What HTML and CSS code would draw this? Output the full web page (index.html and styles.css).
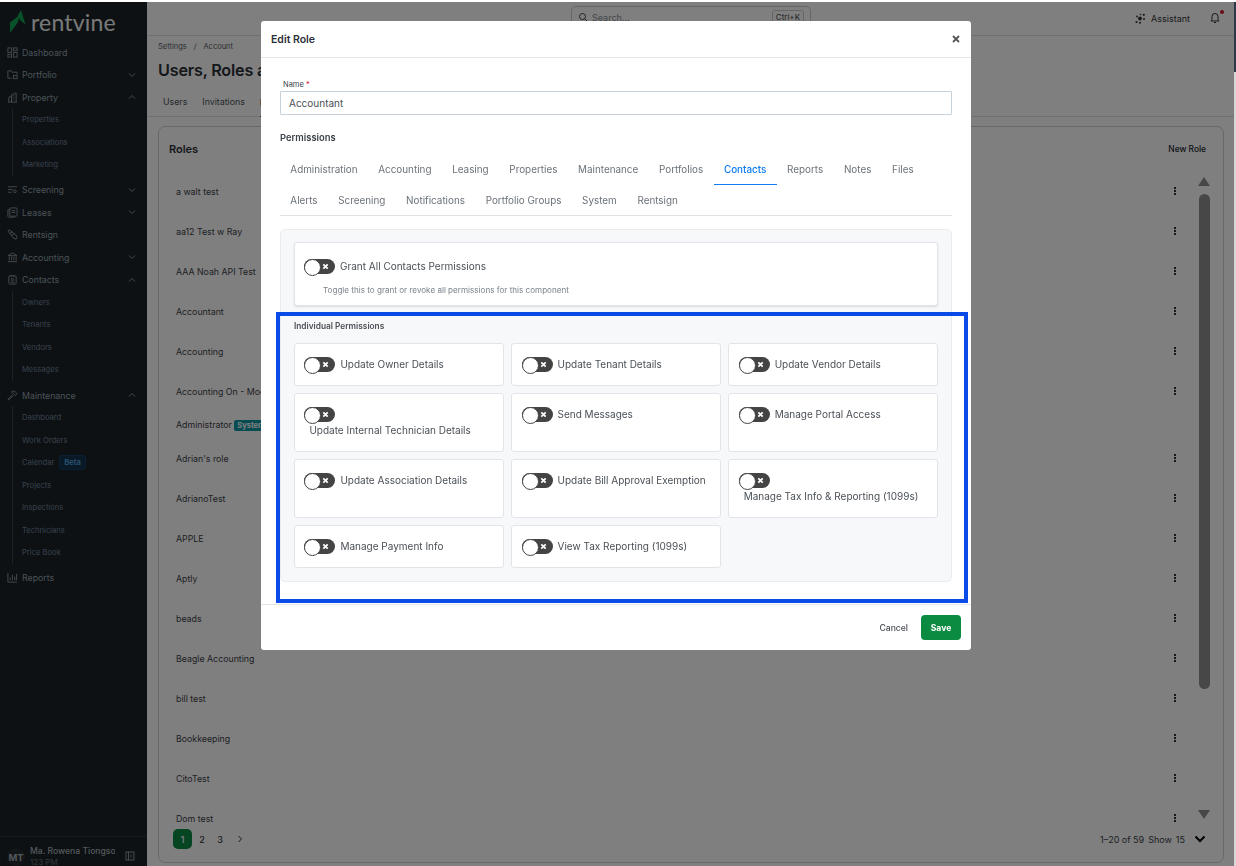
FILE: index.html
```html
<!DOCTYPE html>
<html lang="en">
<head>
  <meta charset="UTF-8" />
  <title>Users, Roles and Permissions</title>
  <link rel="stylesheet" href="styles.css">
</head>
<body>

  <div class="app">
    <!-- Sidebar -->
    <aside class="sidebar">
      <div class="logo">
        <svg class="logo-mark" width="16" height="23" viewBox="0 0 16 23"><path d="M11 0 15.500 14.500 10.500 10.500 9 8 7.500 13 .5 22.500 0 22V12.500L7 7Z" fill="#10a253"/></svg>
        <span class="logo-text">rentvine</span>
      </div>

      <nav class="nav">
        <a class="nav-item"><svg class="nav-icon" viewBox="0 0 12 12"><rect x="1" y="1" width="4" height="5"/><rect x="7" y="1" width="4" height="3"/><rect x="1" y="8" width="4" height="3"/><rect x="7" y="6" width="4" height="5"/></svg>Dashboard</a>
        <a class="nav-item"><svg class="nav-icon" viewBox="0 0 12 12"><path d="M1 10V2h3.500l1 1.500H11V6M1 10h4"/><rect x="7" y="7" width="4" height="3.500"/></svg>Portfolio<svg class="caret" viewBox="0 0 8 8"><path d="M1 2.500 4 5.500 7 2.500"/></svg></a>
        <a class="nav-item"><svg class="nav-icon" viewBox="0 0 12 12"><path d="M1 11h10M2 11V6l3-2v7M5 11V3l5-2v10M7 4h1M7 6h1M7 8h1"/></svg>Property<svg class="caret" viewBox="0 0 8 8"><path d="M1 5.500 4 2.500 7 5.500"/></svg></a>
        <div class="nav-sub">
          <a>Properties</a>
          <a>Associations</a>
          <a>Marketing</a>
        </div>
        <a class="nav-item"><svg class="nav-icon" viewBox="0 0 12 12"><path d="M1 3h10M1 6h5M1 9h4"/><circle cx="8.500" cy="8" r="1.500"/></svg>Screening<svg class="caret" viewBox="0 0 8 8"><path d="M1 2.500 4 5.500 7 2.500"/></svg></a>
        <a class="nav-item"><svg class="nav-icon" viewBox="0 0 12 12"><rect x="3" y="1" width="8" height="9" rx="1"/><path d="M3 3H1v7.500l1 .5h7M5 4h4M5 6h4"/></svg>Leases<svg class="caret" viewBox="0 0 8 8"><path d="M1 2.500 4 5.500 7 2.500"/></svg></a>
        <a class="nav-item"><svg class="nav-icon" viewBox="0 0 12 12"><path d="M1 2 3 1l8 7-1 3-3-1ZM3 5l3-2M5 7l3-2"/></svg>Rentsign</a>
        <a class="nav-item"><svg class="nav-icon" viewBox="0 0 12 12"><path d="M1 4 6 1l5 3ZM2.500 5v4M5 5v4M7.500 5v4M10 5v4M1 10.500h10"/></svg>Accounting<svg class="caret" viewBox="0 0 8 8"><path d="M1 2.500 4 5.500 7 2.500"/></svg></a>
        <a class="nav-item"><svg class="nav-icon" viewBox="0 0 12 12"><rect x="2" y="2" width="8" height="9" rx="1"/><path d="M4.500 1v2M7.500 1v2M4 9h4"/><circle cx="6" cy="6" r="1.300"/></svg>Contacts<svg class="caret" viewBox="0 0 8 8"><path d="M1 5.500 4 2.500 7 5.500"/></svg></a>
        <div class="nav-sub">
          <a>Owners</a>
          <a>Tenants</a>
          <a>Vendors</a>
          <a>Messages</a>
        </div>
        <a class="nav-item"><svg class="nav-icon" viewBox="0 0 12 12"><path d="M5 2 8 1l3 3-2 2-4-4ZM6 5l-5 5 1 1 5-5"/></svg>Maintenance<svg class="caret" viewBox="0 0 8 8"><path d="M1 5.500 4 2.500 7 5.500"/></svg></a>
        <div class="nav-sub">
          <a>Dashboard</a>
          <a>Work Orders</a>
          <a>Calendar <span class="beta">Beta</span></a>
          <a>Projects</a>
          <a>Inspections</a>
          <a>Technicians</a>
          <a>Price Book</a>
        </div>
        <a class="nav-item"><svg class="nav-icon" viewBox="0 0 12 12"><path d="M1 1v10h10M3.500 9V6M6 9V3M8.500 9V5M10.500 9V2"/></svg>Reports</a>
      </nav>

      <div class="user">
        <span class="avatar">MT</span>
        <div class="user-info">
          <div class="user-name">Ma. Rowena Tiongson</div>
          <div class="user-time">123 PM</div>
        </div>
        <svg class="collapse" viewBox="0 0 10 10"><rect x="1" y="1" width="8" height="8"/><path d="M3.500 1v8M7 3.500 5.500 5 7 6.500"/></svg>
      </div>
    </aside>

    <!-- Conteudo -->
    <main class="main">
      <header class="topbar">
        <div class="search">
          <svg class="search-icon" viewBox="0 0 10 10"><circle cx="4.500" cy="4.500" r="3"/><path d="M7 7l2 2"/></svg>
          <span class="search-text">Search...</span>
          <span class="kbd">Ctrl+K</span>
        </div>
        <div class="assistant">
          <svg class="spark" viewBox="0 0 11 11"><circle cx="5" cy="5.500" r="1.900"/><circle cx="8.800" cy="1.800" r="1.100"/><circle cx="1.500" cy="9" r="1.100"/><circle cx="5" cy="9.800" r="1"/><circle cx="2" cy="3.500" r=".9"/><circle cx="5.500" cy="1.500" r=".8"/><circle cx="9" cy="6" r="1"/></svg>
          Assistant
        </div>
        <div class="bell">
          <svg viewBox="0 0 10 12"><path d="M1 9h8L8 7.500V4.500a3 3 0 0 0-6 0v3ZM4 10.500h2"/></svg>
          <span class="bell-dot"></span>
        </div>
      </header>

      <div class="page">
        <div class="crumbs"><span>Settings</span><span>/</span><span>Account</span></div>
        <h1 class="page-title">Users, Roles and Permissions</h1>
        <div class="page-tabs">
          <a>Users</a>
          <a>Invitations</a>
          <a class="active">Roles</a>
        </div>

        <section class="card">
          <div class="card-head">
            <h2>Roles</h2>
            <a class="new-role">New Role</a>
          </div>

          <div class="list-wrap">
            <div class="list">
              <div class="row">a walt test<span class="kebab"></span></div>
              <div class="row">aa12 Test w Ray<span class="kebab"></span></div>
              <div class="row">AAA Noah API Test<span class="kebab"></span></div>
              <div class="row">Accountant<span class="kebab"></span></div>
              <div class="row">Accounting<span class="kebab"></span></div>
              <div class="row">Accounting On - Modified<span class="kebab"></span></div>
              <div class="row row-short"><span>Administrator <span class="system">System</span></span></div>
              <div class="row">Adrian's role<span class="kebab"></span></div>
              <div class="row">AdrianoTest<span class="kebab"></span></div>
              <div class="row">APPLE<span class="kebab"></span></div>
              <div class="row">Aptly<span class="kebab"></span></div>
              <div class="row">beads<span class="kebab"></span></div>
              <div class="row">Beagle Accounting<span class="kebab"></span></div>
              <div class="row">bill test<span class="kebab"></span></div>
              <div class="row">Bookkeeping<span class="kebab"></span></div>
              <div class="row">CitoTest<span class="kebab"></span></div>
              <div class="row">Dom test<span class="kebab"></span></div>
            </div>
            <div class="scrollbar">
              <span class="arrow-up"></span>
              <span class="thumb"></span>
              <span class="arrow-down"></span>
            </div>
          </div>

          <div class="pager">
            <div class="pages">
              <span class="page-num current">1</span>
              <span class="page-num">2</span>
              <span class="page-num">3</span>
              <svg class="page-next" viewBox="0 0 8 8"><path d="M2.500 1 5.500 4 2.500 7"/></svg>
            </div>
            <div class="page-info">
              <span>1–20 of 59</span>
              <span>Show</span>
              <span>15</span>
              <svg class="page-size" viewBox="0 0 12 8"><path d="M1.500 1.500 6 6l4.500-4.500"/></svg>
            </div>
          </div>
        </section>
      </div>
    </main>
  </div>

  <div class="backdrop"></div>

  <!-- Scrollbar da janela -->
  <div class="edge"><span class="edge-thumb"></span></div>

  <!-- Modal -->
  <div class="modal">
    <div class="modal-head">
      <h3>Edit Role</h3>
      <svg class="modal-close" viewBox="0 0 8 8"><path d="M1 1l6 6M7 1 1 7"/></svg>
    </div>

    <div class="modal-body">
      <label class="field-label">Name <span class="req">*</span></label>
      <input class="field" type="text" value="Accountant">

      <h4 class="perm-title">Permissions</h4>

      <div class="tabs">
        <a>Administration</a>
        <a>Accounting</a>
        <a>Leasing</a>
        <a>Properties</a>
        <a>Maintenance</a>
        <a>Portfolios</a>
        <a class="active">Contacts</a>
        <a>Reports</a>
        <a>Notes</a>
        <a>Files</a>
        <a>Alerts</a>
        <a>Screening</a>
        <a>Notifications</a>
        <a>Portfolio Groups</a>
        <a>System</a>
        <a>Rentsign</a>
      </div>

      <div class="panel">
        <div class="grant">
          <div class="perm">
            <span class="toggle"><svg viewBox="0 0 8 8"><path d="M1.500 1.500l5 5M6.500 1.500l-5 5"/></svg></span>
            <span class="perm-label">Grant All Contacts Permissions</span>
          </div>
          <p class="hint">Toggle this to grant or revoke all permissions for this component</p>
        </div>

        <h5 class="indiv-title">Individual Permissions</h5>

        <div class="perm-grid">
          <div class="perm perm-card"><span class="toggle"><svg viewBox="0 0 8 8"><path d="M1.500 1.500l5 5M6.500 1.500l-5 5"/></svg></span><span class="perm-label">Update Owner Details</span></div>
          <div class="perm perm-card"><span class="toggle"><svg viewBox="0 0 8 8"><path d="M1.500 1.500l5 5M6.500 1.500l-5 5"/></svg></span><span class="perm-label">Update Tenant Details</span></div>
          <div class="perm perm-card"><span class="toggle"><svg viewBox="0 0 8 8"><path d="M1.500 1.500l5 5M6.500 1.500l-5 5"/></svg></span><span class="perm-label">Update Vendor Details</span></div>
          <div class="perm perm-card"><span class="toggle"><svg viewBox="0 0 8 8"><path d="M1.500 1.500l5 5M6.500 1.500l-5 5"/></svg></span><span class="perm-label">Update Internal Technician Details</span></div>
          <div class="perm perm-card"><span class="toggle"><svg viewBox="0 0 8 8"><path d="M1.500 1.500l5 5M6.500 1.500l-5 5"/></svg></span><span class="perm-label">Send Messages</span></div>
          <div class="perm perm-card"><span class="toggle"><svg viewBox="0 0 8 8"><path d="M1.500 1.500l5 5M6.500 1.500l-5 5"/></svg></span><span class="perm-label">Manage Portal Access</span></div>
          <div class="perm perm-card"><span class="toggle"><svg viewBox="0 0 8 8"><path d="M1.500 1.500l5 5M6.500 1.500l-5 5"/></svg></span><span class="perm-label">Update Association Details</span></div>
          <div class="perm perm-card"><span class="toggle"><svg viewBox="0 0 8 8"><path d="M1.500 1.500l5 5M6.500 1.500l-5 5"/></svg></span><span class="perm-label">Update Bill Approval Exemption</span></div>
          <div class="perm perm-card"><span class="toggle"><svg viewBox="0 0 8 8"><path d="M1.500 1.500l5 5M6.500 1.500l-5 5"/></svg></span><span class="perm-label">Manage Tax Info &amp; Reporting (1099s)</span></div>
          <div class="perm perm-card"><span class="toggle"><svg viewBox="0 0 8 8"><path d="M1.500 1.500l5 5M6.500 1.500l-5 5"/></svg></span><span class="perm-label">Manage Payment Info</span></div>
          <div class="perm perm-card"><span class="toggle"><svg viewBox="0 0 8 8"><path d="M1.500 1.500l5 5M6.500 1.500l-5 5"/></svg></span><span class="perm-label">View Tax Reporting (1099s)</span></div>
        </div>
      </div>
    </div>

    <div class="modal-foot">
      <a class="cancel">Cancel</a>
      <button class="save" type="button">Save</button>
    </div>
  </div>

  <!-- Marcacao azul do screenshot -->
  <div class="highlight"></div>

</body>
</html>
```

FILE: styles.css
```css
/* Geral */
* {
  box-sizing: border-box;
}

html, body {
  height: 100%;
}

body {
  margin: 0;
  padding: 2px 2px 0 0;
  background: #fff;
  font-family: Inter, "Noto Sans", sans-serif;
  color: #2b3036;
  overflow: hidden;
}

h1, h2, h3, h4, h5, p {
  margin: 0;
}

.app {
  display: flex;
  height: 100%;
}

/* Sidebar */
.sidebar {
  width: 147px;
  flex: none;
  display: flex;
  flex-direction: column;
  background: #1a2327;
  color: #96a3b0;
}

.logo {
  height: 33px;
  display: flex;
  align-items: center;
  padding: 6px 0 0 10px;
}

.logo-mark {
  flex: none;
}

.logo-text {
  margin-left: 5px;
  font-family: Lato, sans-serif;
  font-size: 23px;
  line-height: 24px;
  color: #f2f2f2;
  letter-spacing: .2px;
}

.nav {
  padding-top: 6px;
  font-size: 8.800px;
}

.nav-item {
  height: 22.500px;
  display: flex;
  align-items: center;
  padding-left: 7px;
  position: relative;
}

.nav-icon {
  width: 11px;
  height: 11px;
  margin-right: 4px;
  flex: none;
  fill: none;
  stroke: #8c98a3;
  stroke-width: 1;
}

.caret {
  width: 8px;
  height: 8px;
  margin-left: auto;
  margin-right: 11px;
  fill: none;
  stroke: #8c98a3;
  stroke-width: 1;
}

.nav-sub {
  margin: 0 0 2.700px 12px;
  padding-left: 9px;
  border-left: 1px solid #3a4449;
  font-size: 7.600px;
  color: #71829b;
}

.nav-sub a {
  height: 22.500px;
  display: flex;
  align-items: center;
}

.beta {
  margin-left: 5px;
  padding: 2px 4px;
  border: 1px solid #143f63;
  border-radius: 3px;
  background: #12324a;
  color: #5aa6e0;
  font-weight: 600;
}

.user {
  margin-top: auto;
  height: 30px;
  display: flex;
  align-items: flex-start;
  padding: 9px 7px 0 7px;
  border-top: 1px solid #2b3438;
}

.avatar {
  width: 18px;
  height: 18px;
  margin-top: 2px;
  flex: none;
  border-radius: 50%;
  background: #242d31;
  display: flex;
  align-items: center;
  justify-content: center;
  font-size: 9.500px;
  font-weight: 700;
  color: #a8b0b6;
}

.user-info {
  width: 85px;
  margin-left: 5px;
  overflow: hidden;
}

.user-name {
  font-size: 8.600px;
  font-weight: 500;
  line-height: 11px;
  white-space: nowrap;
  color: #a8b0b6;
}

.user-time {
  font-size: 8px;
  line-height: 11px;
  color: #66727a;
}

.collapse {
  width: 10px;
  height: 10px;
  margin: 5px 0 0 10px;
  flex: none;
  fill: none;
  stroke: #8c98a3;
  stroke-width: 1;
}

/* Conteudo */
.main {
  flex: 1;
  min-width: 0;
  display: flex;
  flex-direction: column;
}

.topbar {
  height: 34px;
  flex: none;
  display: flex;
  align-items: center;
  padding-right: 12px;
  border-bottom: 1px solid #dde1e5;
  position: relative;
  font-size: 9px;
}

.search {
  position: absolute;
  left: 424px;
  top: 4px;
  width: 240px;
  height: 22px;
  display: flex;
  align-items: center;
  padding: 0 6px;
  border: 1px solid #c9ced4;
  border-radius: 5px;
  color: #8a9199;
}

.search-icon {
  width: 10px;
  height: 10px;
  margin-right: 4px;
  fill: none;
  stroke: #444;
}

.kbd {
  margin-left: auto;
  padding: 1px 3px;
  border: 1px solid #c9ced4;
  border-radius: 3px;
  font-size: 8px;
  color: #444;
}

.assistant {
  margin-left: auto;
  display: flex;
  align-items: center;
  gap: 5px;
  color: #333;
}

.spark {
  width: 11px;
  height: 11px;
  fill: #333;
}

.bell {
  width: 12px;
  height: 13px;
  margin-left: 20px;
  position: relative;
}

.bell svg {
  width: 10px;
  height: 12px;
  fill: none;
  stroke: #333;
  display: block;
}

.bell-dot {
  position: absolute;
  right: -2px;
  top: -2px;
  width: 4px;
  height: 4px;
  border-radius: 50%;
  background: #d1122b;
}

.page {
  flex: 1;
  min-height: 0;
  display: flex;
  flex-direction: column;
  padding: 0 10px 3px 11px;
}

.crumbs {
  display: flex;
  gap: 7px;
  padding-top: 6px;
  font-size: 7.500px;
  line-height: 10px;
  color: #555c63;
}

.page-title {
  margin-top: 6px;
  font-size: 16.200px;
  line-height: 24px;
  font-weight: 600;
  letter-spacing: -.2px;
  white-space: nowrap;
}

.page-tabs {
  height: 32px;
  margin: 3px -10px 0 -11px;
  flex: none;
  display: flex;
  align-items: flex-end;
  gap: 15px;
  padding-left: 16px;
  border-bottom: 1px solid #dde1e5;
  font-size: 8.800px;
  color: #4c5359;
}

.page-tabs a {
  height: 26px;
  padding-top: 6px;
}

.page-tabs a.active {
  border-bottom: 1px solid #0b8a42;
  margin-bottom: -1px;
}

.card {
  flex: 1;
  min-height: 0;
  margin-top: 9px;
  display: flex;
  flex-direction: column;
  border: 1px solid #cfd3d8;
  border-radius: 7px;
}

.card-head {
  height: 44px;
  flex: none;
  display: flex;
  align-items: center;
  justify-content: space-between;
  padding: 0 17px 0 10px;
}

.card-head h2 {
  font-size: 11px;
  font-weight: 600;
}

.new-role {
  font-size: 8.400px;
  font-weight: 500;
  color: #23282d;
}

.list-wrap {
  flex: 1;
  min-height: 0;
  display: flex;
}

.list {
  flex: 1;
  min-width: 0;
  overflow: hidden;
  padding-left: 17px;
  font-size: 8.800px;
  color: #3b4148;
}

.row {
  height: 40px;
  display: flex;
  align-items: center;
  justify-content: space-between;
  padding-right: 20px;
  white-space: nowrap;
}

.row-short {
  height: 27px;
}

.system {
  padding: 1px 3px;
  border-radius: 2px;
  background: #0e97a6;
  color: #fff;
  font-size: 7.500px;
  font-weight: 700;
}

/* Tres pontos */
.kebab {
  width: 2px;
  height: 2px;
  background: #333;
  box-shadow: 0 -3px 0 #333, 0 3px 0 #333;
}

.scrollbar {
  width: 27px;
  flex: none;
  display: flex;
  flex-direction: column;
  align-items: flex-start;
  padding: 6px 0 10px 3px;
}

.arrow-up, .arrow-down {
  width: 0;
  height: 0;
  flex: none;
  margin-left: -1px;
  border-left: 6.500px solid transparent;
  border-right: 6.500px solid transparent;
}

.arrow-up {
  border-bottom: 9px solid #8e8e8e;
}

.arrow-down {
  margin-top: auto;
  border-top: 9px solid #8e8e8e;
}

.thumb {
  width: 11px;
  height: 495px;
  margin-top: 8px;
  flex: none;
  border-radius: 6px;
  background: #8e8e8e;
}

.pager {
  height: 33px;
  flex: none;
  display: flex;
  align-items: flex-start;
  justify-content: space-between;
  padding: 0 17px 0 14px;
  font-size: 9px;
}

.pages {
  display: flex;
  align-items: center;
}

.page-num {
  width: 18px;
  height: 20px;
  display: flex;
  align-items: center;
  justify-content: center;
  color: #33383d;
  font-weight: 500;
}

.page-num.current {
  width: 19px;
  margin-right: 1px;
  border-radius: 5px;
  background: #0b8a42;
  color: #fff;
}

.page-next {
  width: 8px;
  height: 8px;
  margin-left: 7px;
  fill: none;
  stroke: #33383d;
}

.page-info {
  height: 20px;
  display: flex;
  align-items: center;
  gap: 4px;
  color: #3b4148;
}

.page-size {
  width: 12px;
  height: 8px;
  margin-left: 5px;
  fill: none;
  stroke: #000;
  stroke-width: 2;
}

.backdrop {
  position: fixed;
  left: 0;
  right: 2px;
  top: 2px;
  bottom: 0;
  background: rgba(0, 0, 0, .5);
}

.edge {
  position: fixed;
  right: 0;
  top: 2px;
  bottom: 0;
  width: 2px;
  background: #d6d6d6;
}

.edge-thumb {
  display: block;
  height: 70px;
  background: #2a3a4a;
}

/* Modal */
.modal {
  position: fixed;
  left: 261px;
  top: 21px;
  width: 710px;
  height: 629px;
  display: flex;
  flex-direction: column;
  background: #fff;
  border-radius: 3px;
}

.modal-head {
  height: 37px;
  flex: none;
  display: flex;
  align-items: center;
  justify-content: space-between;
  padding: 0 11px 0 10px;
  border-bottom: 1px solid #e3e6e9;
}

.modal-head h3 {
  font-size: 10.500px;
  font-weight: 600;
  color: #2b3036;
}

.modal-close {
  width: 8px;
  height: 8px;
  fill: none;
  stroke: #555;
  stroke-width: 1.800;
}

.modal-body {
  flex: 1;
  min-height: 0;
  padding: 21px 19px 0 19px;
}

.field-label {
  display: block;
  padding-left: 3px;
  font-size: 7.500px;
  line-height: 11px;
  color: #3b4148;
}

.req {
  color: #d1122b;
}

.field {
  width: 100%;
  height: 24px;
  margin-top: 1px;
  display: block;
  padding: 0 8px;
  border: 1px solid #c8d0d9;
  border-radius: 1px;
  outline: none;
  font-family: inherit;
  font-size: 10px;
  color: #4a5056;
}

.perm-title {
  margin-top: 17px;
  font-size: 9.400px;
  line-height: 12px;
  font-weight: 600;
  color: #3b4148;
}

.tabs {
  height: 62px;
  margin-top: 10px;
  display: flex;
  flex-wrap: wrap;
  align-content: flex-start;
  border-bottom: 1px solid #dfe2e6;
  font-size: 9.900px;
  color: #6b7279;
}

.tabs a {
  height: 31px;
  padding: 0 10.350px;
  display: flex;
  align-items: center;
  border-bottom: 1px solid transparent;
}

.tabs a.active {
  color: #0d7cf2;
  font-weight: 500;
  border-bottom-color: #0d7cf2;
}

.panel {
  margin-top: 13px;
  padding: 12px 13px 13px;
  border: 1px solid #e9ecef;
  border-radius: 5px;
  background: #f7f8f9;
}

.grant {
  height: 64px;
  padding: 16px 9px 0;
  border: 1px solid #e1e4e8;
  border-radius: 3px;
  background: #fff;
  box-shadow: 0 1px 2px rgba(0, 0, 0, .12);
}

.hint {
  margin-top: 11px;
  padding-left: 19px;
  font-size: 8.100px;
  line-height: 10px;
  color: #7b838b;
}

.indiv-title {
  margin-top: 15px;
  font-size: 8.300px;
  line-height: 10px;
  font-weight: 600;
  color: #4a5056;
}

.perm-grid {
  margin-top: 12px;
  display: grid;
  grid-template-columns: repeat(3, 1fr);
  gap: 7px 7.400px;
}

.perm {
  display: flex;
  flex-wrap: wrap;
  align-items: center;
  row-gap: 1px;
}

.perm-card {
  align-content: flex-start;
  padding: 13px 9.400px;
  border: 1px solid #e1e4e8;
  border-radius: 3px;
  background: #fff;
}

.perm-label {
  margin-left: 5px;
  font-size: 10px;
  line-height: 15px;
  color: #4a5056;
  white-space: nowrap;
}

/* Toggle desligado */
.toggle {
  width: 31px;
  height: 15px;
  flex: none;
  position: relative;
  display: block;
  border-radius: 8px;
  background: #444;
}

.toggle::before {
  content: "";
  position: absolute;
  left: 0;
  top: 0;
  width: 15px;
  height: 15px;
  border: 1px solid #444;
  border-radius: 50%;
  background: #fff;
}

.toggle svg {
  position: absolute;
  right: 6px;
  top: 4px;
  width: 7px;
  height: 7px;
  fill: none;
  stroke: #fff;
  stroke-width: 2;
}

.modal-foot {
  height: 46px;
  flex: none;
  display: flex;
  align-items: center;
  justify-content: flex-end;
  gap: 13px;
  padding-right: 10px;
  border-top: 1px solid #e3e6e9;
}

.cancel {
  font-size: 8.600px;
  font-weight: 500;
  color: #4a5056;
}

.save {
  width: 40px;
  height: 25px;
  border: none;
  border-radius: 4px;
  background: #0b8a42;
  color: #fff;
  font-family: inherit;
  font-size: 8.600px;
  font-weight: 700;
}

.highlight {
  position: fixed;
  left: 276px;
  top: 312px;
  width: 692px;
  height: 291px;
  border: 4px solid #0a4be8;
  pointer-events: none;
}
```
